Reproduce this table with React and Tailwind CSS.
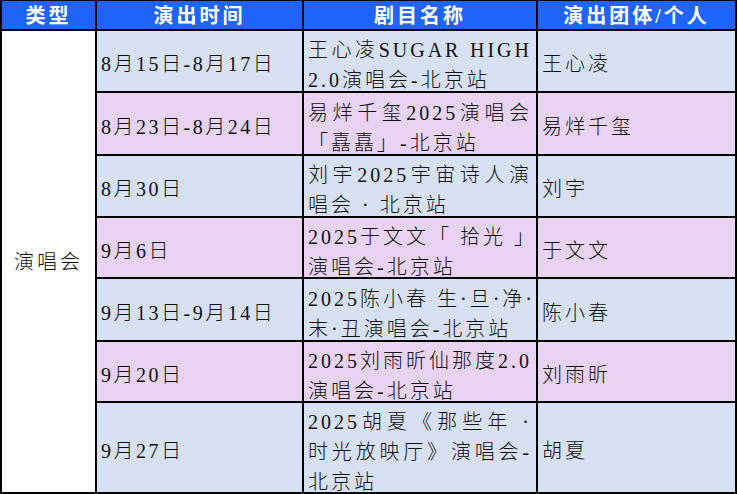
import React from 'react'

const rows = [
  { date: '8月15日-8月17日', title: ['王心凌SUGAR HIGH', '2.0演唱会-北京站'], artist: '王心凌' },
  { date: '8月23日-8月24日', title: ['易烊千玺2025演唱会', '「嚞嚞」-北京站'], artist: '易烊千玺' },
  { date: '8月30日', title: ['刘宇2025宇宙诗人演', '唱会 · 北京站'], artist: '刘宇' },
  { date: '9月6日', title: ['2025于文文「 拾光 」', '演唱会-北京站'], artist: '于文文' },
  { date: '9月13日-9月14日', title: ['2025陈小春 生·旦·净·', '末·丑演唱会-北京站'], artist: '陈小春' },
  { date: '9月20日', title: ['2025刘雨昕仙那度2.0', '演唱会-北京站'], artist: '刘雨昕' },
  { date: '9月27日', title: ['2025胡夏《那些年 ·', '时光放映厅》演唱会-', '北京站'], artist: '胡夏' },
]

function Head({ children }) {
  return (
    <div className="bg-[#2064fc] flex items-center justify-center text-white font-bold text-[20px] tracking-[3px] pt-[1px]">
      {children}
    </div>
  )
}

export default function App() {
  return (
    <div className="w-[738px] h-[494px] bg-white font-['Liberation_Serif','Noto_Sans_CJK_SC',serif] text-[#111]">
      <div className="w-[737px] bg-black pt-[1px] pb-[2px] px-[2px] grid grid-cols-[93px_205px_232px_197px] grid-rows-[28px_60px_61px_60px_59px_61px_59px_89px] gap-[2px]">
        <Head>类型</Head>
        <Head>演出时间</Head>
        <Head>剧目名称</Head>
        <Head>演出团体/个人</Head>

        {/* type column, spans all rows */}
        <div className="row-span-7 bg-white flex items-center justify-center text-[20px] font-light tracking-[3px] pt-[1px]">
          演唱会
        </div>

        {rows.map((r, i) => {
          const bg = i % 2 === 0 ? 'bg-[#d7e1f3]' : 'bg-[#e8d4f2]'
          return (
            <React.Fragment key={r.date}>
              {/* Date */}
              <div className={`${bg} flex items-center pl-[4px] pt-[6px] text-[20px] font-light tracking-[2.5px] whitespace-nowrap`}>
                {r.date}
              </div>

              {/* Title */}
              <div className={`${bg} flex flex-col justify-center px-[4px] pt-[8px] text-[20px] font-light leading-[30px] tracking-[3px]`}>
                {r.title.map((line, j) => (
                  <div
                    key={j}
                    className={j < r.title.length - 1 ? 'whitespace-nowrap text-justify [text-align-last:justify]' : 'whitespace-nowrap'}
                  >
                    {line}
                  </div>
                ))}
              </div>

              {/* Artist */}
              <div className={`${bg} flex items-center pl-[4px] pt-[6px] text-[20px] font-light tracking-[3px]`}>
                {r.artist}
              </div>
            </React.Fragment>
          )
        })}
      </div>
    </div>
  )
}
